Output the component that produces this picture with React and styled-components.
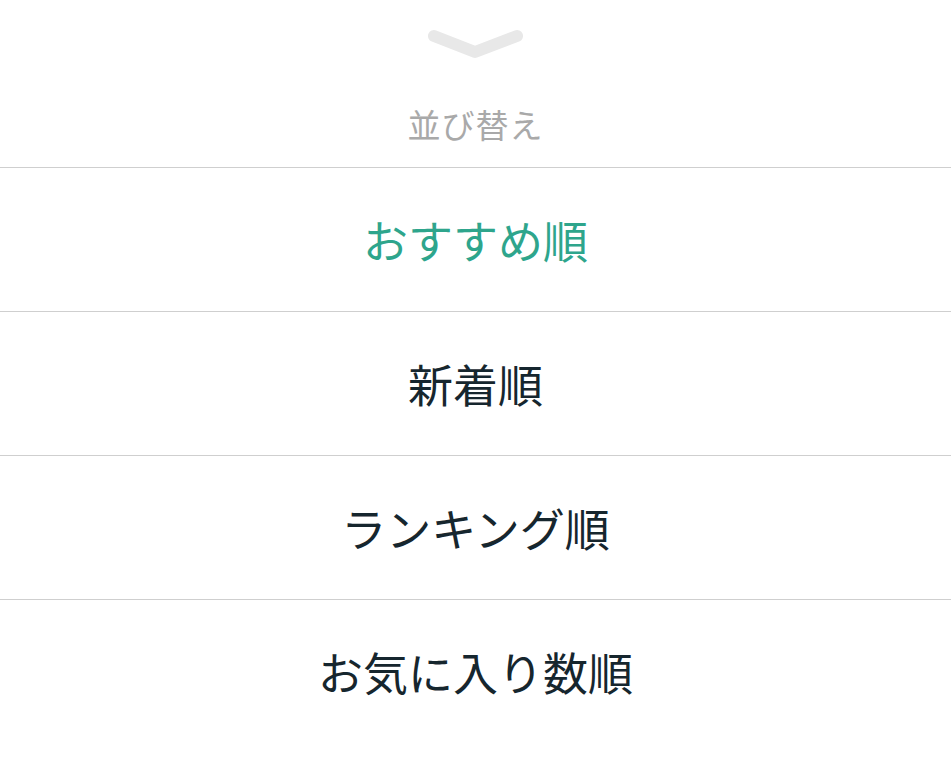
import styled, { createGlobalStyle } from "styled-components";

const GlobalStyle = createGlobalStyle`
  html, body {
    margin: 0;
    padding: 0;
    background: #fff;
  }
  body {
    font-family: "Noto Sans CJK JP", "Noto Sans", sans-serif;
  }
`;

const Sheet = styled.div`
  width: 951px;
  min-height: 758px;
  background: #fff;
`;

const Header = styled.div`
  height: 167px;
  display: flex;
  flex-direction: column;
  align-items: center;
  border-bottom: 1px solid #cfcfcf;
`;

const Handle = styled.svg`
  margin-top: 28px;
  width: 96px;
  height: 32px;
`;

const Title = styled.div`
  margin-top: 44px;
  font-size: 33px;
  line-height: 40px;
  color: #a9a9a9;
  letter-spacing: 1px;
`;

const List = styled.ul`
  list-style: none;
  margin: 0;
  padding: 0;
`;

const Option = styled.li`
  height: 143px;
  display: flex;
  align-items: center;
  justify-content: center;
  font-size: 45px;
  color: ${(props) => (props.active ? "#2ea58c" : "#16262e")};
  border-bottom: ${(props) => (props.last ? "none" : "1px solid #cfcfcf")};
  cursor: pointer;
`;

const options = ["おすすめ順", "新着順", "ランキング順", "お気に入り数順"];

const App = () => {
  return (
    <Sheet>
      <GlobalStyle />
      <Header>
        <Handle viewBox="0 0 96 32">
          <path
            d="M6 8 L47 24 L89 8"
            fill="none"
            stroke="#e8e8e8"
            strokeWidth="12"
            strokeLinecap="round"
            strokeLinejoin="round"
          />
        </Handle>
        <Title>並び替え</Title>
      </Header>
      <List>
        {options.map((label, i) => (
          <Option key={label} active={i === 0} last={i === options.length - 1}>
            {label}
          </Option>
        ))}
      </List>
    </Sheet>
  );
};

export default App;
